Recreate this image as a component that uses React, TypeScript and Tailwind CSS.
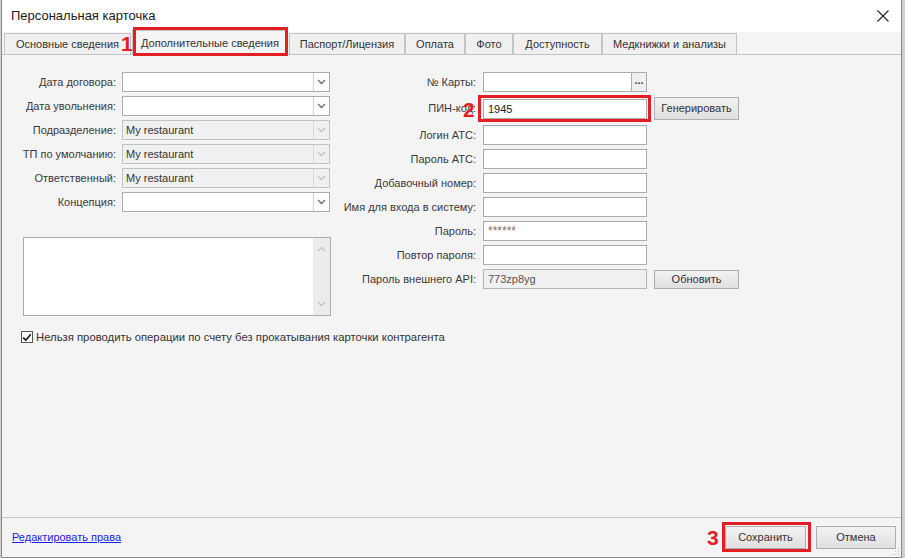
import React from "react";

const font = { fontFamily: '"Liberation Sans", Arial, sans-serif' };

function Chevron({ disabled }: { disabled?: boolean }) {
  return (
    <svg width="9" height="6" viewBox="0 0 9 6">
      <path d="M1 1 L4.5 4.5 L8 1" fill="none" stroke={disabled ? "#c4c4c4" : "#6f6f6f"} strokeWidth="1.4" />
    </svg>
  );
}

function Combo({ value, disabled }: { value?: string; disabled?: boolean }) {
  return (
    <div
      className={`flex h-[20px] w-[208px] border ${disabled ? "border-[#c3c3c3] bg-[#f0f0f0]" : "border-[#acacac] bg-white"}`}
    >
      <div className="flex-1 pl-[3px] leading-[18px] text-[#333]">{value}</div>
      <div className={`flex w-[16px] items-center justify-center border-l ${disabled ? "border-[#d8d8d8]" : "border-[#d0d0d0]"}`}>
        <Chevron disabled={disabled} />
      </div>
    </div>
  );
}

function LeftRow({ label, children }: { label: string; children: React.ReactNode }) {
  return (
    <div className="flex h-[20px] items-center">
      <div className="w-[114px] text-right text-[#3a3a3a]">{label}</div>
      <div className="ml-[6px]">{children}</div>
    </div>
  );
}

function Input({ value, disabled, className = "" }: { value?: string; disabled?: boolean; className?: string }) {
  return (
    <div
      className={`h-[20px] w-[164px] border pl-[4px] leading-[18px] ${disabled ? "border-[#b5b5b5] bg-[#f0f0f0] text-[#555]" : "border-[#acacac] bg-white text-[#222]"} ${className}`}
    >
      {value}
    </div>
  );
}

function RightRow({ label, children, h = "h-[20px]" }: { label: string; children: React.ReactNode; h?: string }) {
  return (
    <div className={`flex ${h} items-center`}>
      <div className="w-[145px] text-right text-[#3a3a3a]">{label}</div>
      <div className="ml-[7px] flex items-center">{children}</div>
    </div>
  );
}

function Btn({ label, className = "" }: { label: string; className?: string }) {
  return (
    <div
      className={`flex items-center justify-center border border-[#adadad] bg-gradient-to-b from-[#f2f2f2] to-[#e0e0e0] text-[#333] ${className}`}
    >
      {label}
    </div>
  );
}

const tabs = [
  { label: "Основные сведения", w: "w-[127px]" },
  { label: "Дополнительные сведения", w: "w-[156px]", active: true },
  { label: "Паспорт/Лицензия", w: "w-[116px]" },
  { label: "Оплата", w: "w-[60px]" },
  { label: "Фото", w: "w-[48px]" },
  { label: "Доступность", w: "w-[89px]" },
  { label: "Медкнижки и анализы", w: "w-[135px]" },
];

export default function App() {
  return (
    <div className="relative h-[558px] w-[905px] overflow-hidden bg-[#cfcfcf] text-[11px]" style={font}>
      <div className="ml-[1px] flex h-[558px] w-[901px] flex-col border-b border-l border-r border-[#8a8a8a] bg-[#f4f4f4]">
        {/* Title bar */}
        <div className="flex h-[32px] shrink-0 items-center justify-between bg-white pl-[9px] pr-[12px]">
          <span className="text-[13px] text-[#1a1a1a]">Персональная карточка</span>
          <svg width="12" height="12" viewBox="0 0 12 12">
            <path d="M0.5 0.5 L11.5 11.5 M11.5 0.5 L0.5 11.5" stroke="#222" strokeWidth="1.1" />
          </svg>
        </div>

        {/* Tabs */}
        <div className="relative flex h-[22px] shrink-0 items-end pl-[2px]">
          {tabs.map((t) =>
            t.active ? (
              <div
                key={t.label}
                className={`relative z-10 -mb-px ml-[1px] mr-[1px] flex h-[25px] ${t.w} items-center justify-center border border-b-0 border-[#c4c4c4] bg-[#f4f4f4] text-[#333]`}
              >
                {t.label}
              </div>
            ) : (
              <div
                key={t.label}
                className={`flex h-[21px] ${t.w} items-center justify-center border border-b-0 border-[#c4c4c4] bg-[#f0f0f0] text-[#333]`}
              >
                {t.label}
              </div>
            ),
          )}
          {/* Red box 1 */}
          <div className="absolute left-[131px] top-[-5px] z-20 h-[29px] w-[155px] border-[3px] border-[#e31e24]" />
          <div className="absolute left-[119px] top-[1px] z-20 text-[21px] font-bold leading-[21px] text-[#e31e24]">1</div>
        </div>

        {/* Panel */}
        <div className="flex h-[463px] shrink-0 flex-col border-t border-[#c4c4c4] pt-[17px]">
          <div className="flex">
            {/* Left column */}
            <div className="flex w-[329px] flex-col">
              <div className="flex flex-col gap-[4px]">
                <LeftRow label="Дата договора:">
                  <Combo />
                </LeftRow>
                <LeftRow label="Дата увольнения:">
                  <Combo />
                </LeftRow>
                <LeftRow label="Подразделение:">
                  <Combo value="My restaurant" disabled />
                </LeftRow>
                <LeftRow label="ТП по умолчанию:">
                  <Combo value="My restaurant" disabled />
                </LeftRow>
                <LeftRow label="Ответственный:">
                  <Combo value="My restaurant" disabled />
                </LeftRow>
                <LeftRow label="Концепция:">
                  <Combo />
                </LeftRow>
              </div>

              <div className="ml-[21px] mt-[25px] flex h-[79px] w-[308px] border border-[#acacac] bg-white">
                <div className="flex-1" />
                <div className="flex w-[17px] flex-col items-center justify-between bg-[#ececec] py-[8px]">
                  <svg width="9" height="6" viewBox="0 0 9 6">
                    <path d="M1 5 L4.5 1.5 L8 5" fill="none" stroke="#c4c4c4" strokeWidth="1.3" />
                  </svg>
                  <svg width="9" height="6" viewBox="0 0 9 6">
                    <path d="M1 1 L4.5 4.5 L8 1" fill="none" stroke="#c4c4c4" strokeWidth="1.3" />
                  </svg>
                </div>
              </div>
            </div>

            {/* Right column */}
            <div className="relative flex flex-col">
              <RightRow label="№ Карты:">
                <div className="flex h-[20px] w-[164px] border border-[#acacac] bg-white">
                  <div className="flex-1" />
                  <div className="flex w-[15px] items-center justify-center border-l border-[#acacac] bg-[#efefef] pb-[3px] text-[11px] font-bold leading-none text-[#444]">
                    ...
                  </div>
                </div>
              </RightRow>
              <div className="mt-[4px]">
                <RightRow label="ПИН-код:" h="h-[25px]">
                  <Input value="1945" />
                  <Btn label="Генерировать" className="ml-[7px] h-[23px] w-[85px]" />
                </RightRow>
              </div>
              <div className="mt-[4px] flex flex-col gap-[4px]">
                <RightRow label="Логин АТС:">
                  <Input />
                </RightRow>
                <RightRow label="Пароль АТС:">
                  <Input />
                </RightRow>
                <RightRow label="Добавочный номер:">
                  <Input />
                </RightRow>
                <RightRow label="Имя для входа в систему:">
                  <Input />
                </RightRow>
                <RightRow label="Пароль:">
                  <div className="h-[20px] w-[164px] border border-[#acacac] bg-white pl-[4px] text-[12px] leading-[18px] text-[#8b6a5a]">
                    ******
                  </div>
                </RightRow>
                <RightRow label="Повтор пароля:">
                  <Input />
                </RightRow>
                <RightRow label="Пароль внешнего API:">
                  <Input value="773zp8yg" disabled />
                  <Btn label="Обновить" className="ml-[7px] h-[19px] w-[85px]" />
                </RightRow>
              </div>
              {/* Red box 2 */}
              <div className="absolute left-[147px] top-[23px] h-[27px] w-[173px] border-[3px] border-[#e31e24]" />
              <div className="absolute left-[132px] top-[27px] text-[21px] font-bold leading-[21px] text-[#e31e24]">2</div>
            </div>
          </div>

          {/* Checkbox */}
          <div className="ml-[19px] mt-[13px] flex items-center">
            <div className="flex h-[12px] w-[12px] items-center justify-center border border-[#555] bg-white">
              <svg width="10" height="9" viewBox="0 0 10 9">
                <path d="M1.2 4.6 L3.8 7.2 L8.8 1.2" fill="none" stroke="#222" strokeWidth="1.7" />
              </svg>
            </div>
            <span className="ml-[3px] text-[11.3px] text-[#333]">Нельзя проводить операции по счету без прокатывания карточки контрагента</span>
          </div>
        </div>

        {/* Footer */}
        <div className="relative flex flex-1 items-center border-t border-[#c4c4c4] pl-[10px] pr-[5px]">
          <span className="text-[#1e1ef0] underline">Редактировать права</span>
          <div className="flex-1" />
          <div className="relative">
            <div className="absolute left-[-3px] top-[-4px] h-[30px] w-[89px] border-[3px] border-[#e31e24]" />
            <div className="absolute left-[-18px] top-[1px] text-[21px] font-bold leading-[21px] text-[#e31e24]">3</div>
            <Btn label="Сохранить" className="h-[23px] w-[81px]" />
          </div>
          <Btn label="Отмена" className="ml-[10px] h-[23px] w-[80px]" />
          <svg className="absolute bottom-[1px] right-[1px]" width="8" height="8" viewBox="0 0 8 8">
            <rect x="6" y="0" width="1" height="1" fill="#bbb" />
            <rect x="3" y="3" width="1" height="1" fill="#bbb" />
            <rect x="6" y="3" width="1" height="1" fill="#bbb" />
            <rect x="0" y="6" width="1" height="1" fill="#bbb" />
            <rect x="3" y="6" width="1" height="1" fill="#bbb" />
            <rect x="6" y="6" width="1" height="1" fill="#bbb" />
          </svg>
        </div>
      </div>
    </div>
  );
}
